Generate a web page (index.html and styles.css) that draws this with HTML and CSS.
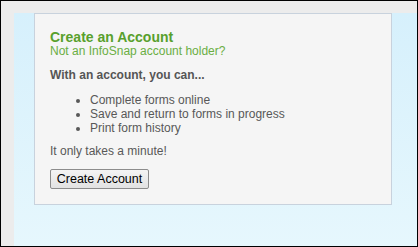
FILE: index.html
```html
<!DOCTYPE html>
<html>
<head>
<meta charset="utf-8">
<link rel="stylesheet" href="styles.css">
</head>
<body>
<div class="frame">
  <div class="stage">
    <div class="card">
      <h1 class="title">Create an Account</h1>
      <p class="subtitle">Not an InfoSnap account holder?</p>
      <p class="lead">With an account, you can...</p>
      <ul class="features">
        <li>Complete forms online</li>
        <li>Save and return to forms in progress</li>
        <li>Print form history</li>
      </ul>
      <p class="note">It only takes a minute!</p>
      <button class="btn" type="button">Create Account</button>
    </div>
  </div>
</div>
</body>
</html>
```

FILE: styles.css
```css
html, body {
  margin: 0;
  padding: 0;
}
body {
  width: 418px;
  height: 247px;
  overflow: hidden;
  font-family: Arial, "Liberation Sans", sans-serif;
}
.frame {
  box-sizing: border-box;
  width: 418px;
  height: 247px;
  border: 1px solid #000;
  background: #ececec;
  padding: 12px 0 0 13px;
  display: flex;
}
.stage {
  flex: 1;
  background: linear-gradient(to bottom, #d6f0fc, #e6f7fd);
  padding-left: 20px;
  display: flex;
  align-items: flex-start;
}
.card {
  box-sizing: border-box;
  width: 358px;
  height: 192px;
  background: #f5f5f5;
  border: 1px solid #c8d2dd;
  padding: 16px 15px 0 15px;
  color: #585858;
  font-size: 12px;
  line-height: 14px;
}
.title {
  margin: 0;
  font-size: 14px;
  line-height: 14px;
  font-weight: bold;
  color: #58a02c;
}
.subtitle {
  margin: 0;
  color: #6aae43;
}
.lead {
  margin: 10px 0 0 0;
  font-weight: bold;
  color: #555;
}
.features {
  margin: 11px 0 0 0;
  padding-left: 40px;
  list-style: disc;
}
.note {
  margin: 9px 0 0 0;
}
.btn {
  display: block;
  margin-top: 11px;
  box-sizing: border-box;
  width: 99px;
  height: 20px;
  padding: 0;
  font-family: Arial, "Liberation Sans", sans-serif;
  font-size: 12.5px;
  color: #000;
  background: linear-gradient(to bottom, #f4f4f4, #e2e2e2);
  border: 1px solid #8c8c8c;
  border-radius: 2px;
}
```
